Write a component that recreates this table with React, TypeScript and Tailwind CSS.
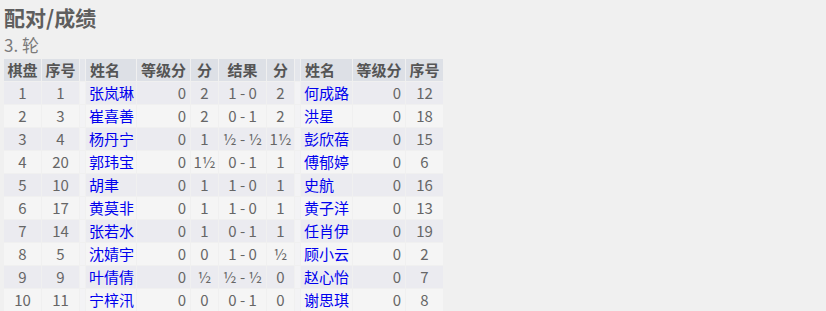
import React from "react";

type Row = [string, string, string, string, string, string, string, string, string, string];

const rows: Row[] = [
  ["1", "1", "张岚琳", "0", "2", "1 - 0", "2", "何成路", "0", "12"],
  ["2", "3", "崔喜善", "0", "2", "0 - 1", "2", "洪星", "0", "18"],
  ["3", "4", "杨丹宁", "0", "1", "½ - ½", "1½", "彭欣蓓", "0", "15"],
  ["4", "20", "郭玮宝", "0", "1½", "0 - 1", "1", "傅郁婷", "0", "6"],
  ["5", "10", "胡聿", "0", "1", "1 - 0", "1", "史航", "0", "16"],
  ["6", "17", "黄莫非", "0", "1", "1 - 0", "1", "黄子洋", "0", "13"],
  ["7", "14", "张若水", "0", "1", "0 - 1", "1", "任肖伊", "0", "19"],
  ["8", "5", "沈婧宇", "0", "0", "1 - 0", "½", "顾小云", "0", "2"],
  ["9", "9", "叶倩倩", "0", "½", "½ - ½", "0", "赵心怡", "0", "7"],
  ["10", "11", "宁梓汛", "0", "0", "0 - 1", "0", "谢思琪", "0", "8"],
];

const font = { fontFamily: '"Noto Sans CJK SC", "Noto Sans", sans-serif' };

export default function App() {
  return (
    <div className="min-h-[311px] w-[826px] bg-[#f0f0f0] pl-[3px]" style={font}>
      <div className="pl-[1px] pt-[4px] text-[21px] font-bold leading-[26px] text-[#5e5e5e]">配对/成绩</div>
      <div className="mt-[5px] pl-[1px] text-[17px] leading-[20px] text-[#7a7a7a]">3. 轮</div>
      <table className="mt-[3px] border-separate border-spacing-[1px] text-[15px] leading-[22px]">
        <thead>
          <tr className="h-[22px] bg-[#dde0e6] text-[#555] font-bold">
            <th className="w-[37px] p-0 text-center font-bold">棋盘</th>
            <th className="w-[37px] p-0 text-center font-bold">序号</th>
            <th className="w-[5px] p-0 bg-[#e4e6eb]"></th>
            <th className="w-[50px] p-0 pl-[4px] text-left font-bold">姓名</th>
            <th className="w-[53px] p-0 text-center font-bold">等级分</th>
            <th className="w-[27px] p-0 text-center font-bold">分</th>
            <th className="w-[47px] p-0 text-center font-bold">结果</th>
            <th className="w-[27px] p-0 text-center font-bold">分</th>
            <th className="w-[5px] p-0 bg-[#e4e6eb]"></th>
            <th className="w-[51px] p-0 pl-[4px] text-left font-bold">姓名</th>
            <th className="w-[52px] p-0 text-center font-bold">等级分</th>
            <th className="w-[37px] p-0 text-center font-bold">序号</th>
          </tr>
        </thead>
        <tbody>
          {rows.map((r, i) => (
            <tr
              key={i}
              className={
                (i % 2 === 0 ? "bg-[#ebebf0]" : "bg-[#f5f5f5]") + " h-[22px] text-[#666]"
              }
            >
              <td className="p-0 text-center">{r[0]}</td>
              <td className="p-0 text-center">{r[1]}</td>
              <td className="p-0 bg-[#f3f3f5]"></td>
              <td className="p-0 pl-[3px] text-left whitespace-nowrap text-[#0000ee]">{r[2]}</td>
              <td className="p-0 pr-[4px] text-right">{r[3]}</td>
              <td className="p-0 text-center whitespace-nowrap">{r[4]}</td>
              <td className="p-0 text-center whitespace-nowrap">{r[5]}</td>
              <td className="p-0 text-center whitespace-nowrap">{r[6]}</td>
              <td className="p-0 bg-[#f3f3f5]"></td>
              <td className="p-0 pl-[3px] text-left whitespace-nowrap text-[#0000ee]">{r[7]}</td>
              <td className="p-0 pr-[4px] text-right">{r[8]}</td>
              <td className="p-0 text-center">{r[9]}</td>
            </tr>
          ))}
        </tbody>
      </table>
    </div>
  );
}
